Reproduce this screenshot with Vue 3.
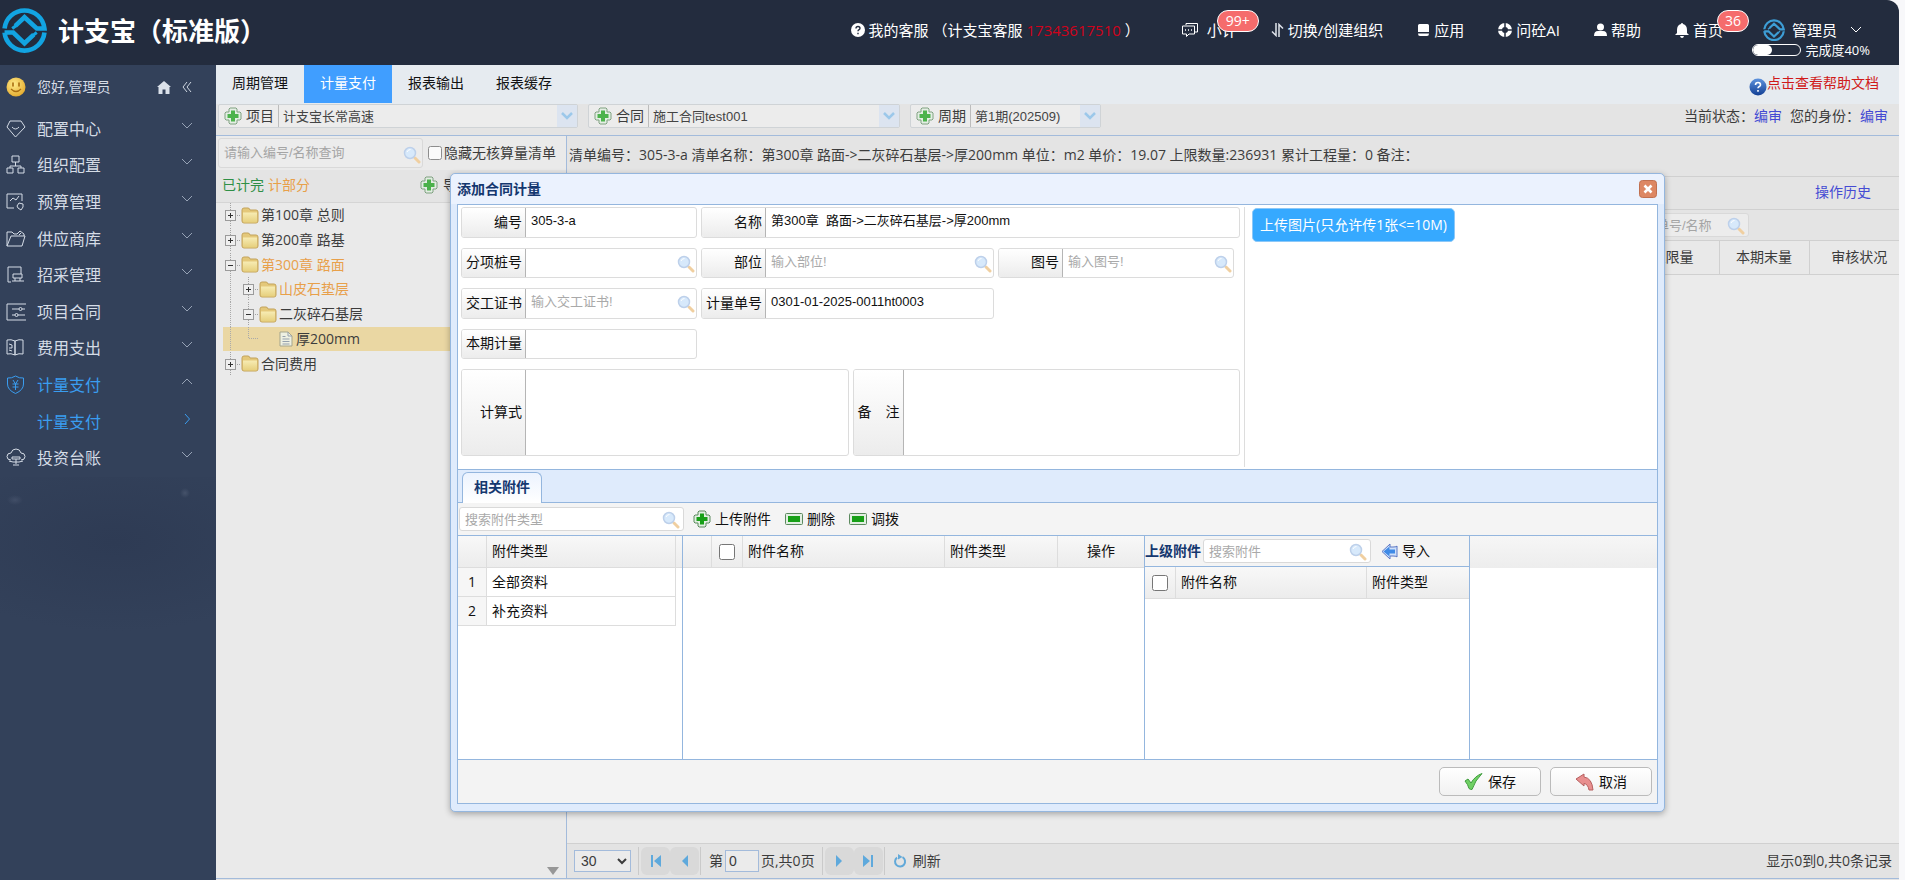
<script setup>
import { ref } from 'vue'

const menus = [
  { name: '配置中心', icon: 'gem' },
  { name: '组织配置', icon: 'org' },
  { name: '预算管理', icon: 'budget' },
  { name: '供应商库', icon: 'folder' },
  { name: '招采管理', icon: 'bid' },
  { name: '项目合同', icon: 'contract' },
  { name: '费用支出', icon: 'book' },
  { name: '计量支付', icon: 'shield', active: true, open: true },
  { name: '计量支付', child: true, active: true },
  { name: '投资台账', icon: 'cloud' }
]

const menuPaths = {
  gem: 'M4 2h11l4 6-9.500 10L1 8zM6 8q3.500 4 7 0',
  org: 'M6 1h7v6H6zM9.500 7v4M4 13v-2h11v2M1 13h6v5H1zM12 13h6v5h-6z',
  budget: 'M8 16H1V2h15v7M4 9l3-3 3 2 3-4M13 11l4 1v3l-2 3-3-2-1-2z',
  folder: 'M1 17V3h5l2 2h3l3-3 4 3v2M1 17L5 7h14l-3 10zM13 6l2-2',
  bid: 'M5 17H2V2h13v7M7 9h9v4H7zM6 16h12M9 13v3M14 13v3',
  contract: 'M20 2H1v16h19M6 7h7M16 7h3M6 13h3M12 13h7M13 7a1.500 1.500 0 1 0 3 0a1.500 1.500 0 1 0-3 0M9 13a1.500 1.500 0 1 0 3 0a1.500 1.500 0 1 0-3 0',
  book: 'M9 3Q5 1 1 2v14q4-1 8 1zM9 3q4-2 8-1v14q-4-1-8 1zM3 6l3 1v3H3M3 12l3 1',
  shield: 'M9.500 1q4 2.500 8 2v6q0 6-8 9.500q-8-3.500-8-9.500V3q4 .5 8-2M7 5l2.500 4L12 5M6.500 9h6M6.500 12h6M9.500 9v6',
  cloud: 'M5 12q-4 0-4-3.500Q1 5 5 5q1-4 5-4t5 4q4 0 4 3.500T15 12M6 9h8v2H6zM3 13l4 1h6l4-1M10 11v5M7 17h6'
}

const tabs = ['周期管理', '计量支付', '报表输出', '报表缓存']
const activeTab = ref('计量支付')

const tree = [
  { text: '第100章 总则', level: 0, open: false },
  { text: '第200章 路基', level: 0, open: false },
  { text: '第300章 路面', level: 0, open: true, partial: true },
  { text: '山皮石垫层', level: 1, open: false, partial: true },
  { text: '二灰碎石基层', level: 1, open: true },
  { text: '厚200mm', level: 2, leaf: true, selected: true },
  { text: '合同费用', level: 0, open: false }
]

const code = ref('305-3-a')
const itemName = ref('第300章  路面->二灰碎石基层->厚200mm')
const stake = ref('')
const part = ref('')
const drawing = ref('')
const certificate = ref('')
const orderNo = ref('0301-01-2025-0011ht0003')
const quantity = ref('')
const formula = ref('')
const remark = ref('')
</script>

<template>
  <div class="page">
    <svg class="defs" aria-hidden="true">
      <defs>
        <linearGradient id="g-folder" x1="0" y1="0" x2="0" y2="1">
          <stop offset="0" stop-color="#f7ecb4" /><stop offset="1" stop-color="#e6cf7c" />
        </linearGradient>
        <radialGradient id="g-smile" cx=".4" cy=".35" r=".7">
          <stop offset="0" stop-color="#ffeb8a" /><stop offset="1" stop-color="#e3a92c" />
        </radialGradient>
        <linearGradient id="g-help" x1="0" y1="0" x2="0" y2="1">
          <stop offset="0" stop-color="#5e93dd" /><stop offset="1" stop-color="#123f94" />
        </linearGradient>
      </defs>
      <symbol id="s-plus" viewBox="0 0 18 18">
        <path d="M6 1h6l1 1v3h3l1 1v6l-1 1h-3v3l-1 1H6l-1-1v-3H2l-1-1V6l1-1h3V2z" fill="#e2efe2" stroke="#5c8a5f" />
        <path d="M7 3.500h4V7h3.500v4H11v3.500H7V11H3.500V7H7z" fill="#17a017" />
      </symbol>
      <symbol id="s-minus" viewBox="0 0 18 12">
        <rect x=".5" y=".5" width="17" height="11" rx="1" fill="#e2efe2" stroke="#5c8a5f" />
        <rect x="3" y="3" width="12" height="6" fill="#17a017" />
      </symbol>
      <symbol id="s-search" viewBox="0 0 18 18">
        <path d="M12 12l4 4" stroke="#f0cfa0" stroke-width="3" stroke-linecap="round" />
        <circle cx="7" cy="7" r="5.500" fill="#d7e9fb" stroke="#bdd0ea" stroke-width="1.500" />
        <path d="M4 6q1-2.500 3.500-2.500" stroke="#fff" fill="none" />
      </symbol>
      <symbol id="s-logo" viewBox="0 0 44 44">
        <g fill="none" stroke="currentColor" stroke-width="4.500">
          <path d="M2.500 20.500A19.600 19.600 0 0 1 41.500 20.500H34L22 9.500L13 18" />
          <path d="M2.500 24.500A19.600 19.600 0 0 0 41.500 24.500M2.500 24.500H11L22 35L31 26.500" />
        </g>
        <path d="M10 20.500l4-3M34 24.500l-4 3" stroke="currentColor" stroke-width="3" />
      </symbol>
      <symbol id="s-folder" viewBox="0 0 18 17">
        <path d="M1 3q0-2 2-2h4q1.500 0 2 2h6q2 0 2 2v9q0 2-2 2H3q-2 0-2-2z" fill="#e4c87a" stroke="#c3a35a" />
        <path d="M2 5.500h14v8.500q0 1.500-1 1.500H3.500q-1.500 0-1.500-1.500z" fill="url(#g-folder)" />
      </symbol>
      <symbol id="s-doc" viewBox="0 0 14 16">
        <path d="M1 1h8l4 4v10H1z" fill="#eef0e2" stroke="#a5a58c" />
        <path d="M9 1v4h4M3.500 5.500h3M3.500 8h7M3.500 10.500h7M3.500 13h7" stroke="#96a1ad" fill="none" />
      </symbol>
    </svg>

    <header class="top">
      <svg class="brand-logo"><use href="#s-logo" /></svg>
      <h1>计支宝（标准版）</h1>
      <nav class="top-nav">
        <a href="#" class="nav-item service">
          <svg width="14" height="14" viewBox="0 0 14 14"><circle cx="7" cy="7" r="7" fill="#fff" /><path d="M5 5.500q0-2 2-2t2 1.800q0 1-1.200 1.600q-.8.400-.8 1.300M7 9.800v1.400" stroke="#232c3e" stroke-width="1.400" fill="none" /></svg>
          <span>我的客服</span>
          <span class="hotline">（计支宝客服 <b>17343617510</b> ）</span>
        </a>
        <a href="#" class="nav-item wide">
          <svg width="16" height="16" viewBox="0 0 16 16" fill="none" stroke="#fff"><path d="M4 3V1.500h11.500V10H13M.5 4h12v8H7l-2.500 2.500V12h-4z" /><path d="M3 8h1M6 8h1M9 8h1" stroke-width="1.500" /></svg>
          <span>小计</span><i class="badge badge-wide">99+</i>
        </a>
        <a href="#" class="nav-item">
          <svg width="13" height="14" viewBox="0 0 13 14" fill="none" stroke="#dfe3ea" stroke-width="1.500"><path d="M5 0v12.500L1 8.500M8 14V1.500l4 4" /></svg>
          <span>切换/创建组织</span>
        </a>
        <a href="#" class="nav-item">
          <svg width="13" height="14" viewBox="0 0 13 14"><path d="M2.500 1h8q1.500 0 1.500 1.500V9H1V2.500Q1 1 2.500 1zM1 10.500h11q0 2.500-2 2.500H3q-2 0-2-2.500z" fill="#fff" /></svg>
          <span>应用</span>
        </a>
        <a href="#" class="nav-item">
          <svg width="14" height="14" viewBox="0 0 14 14"><circle cx="7" cy="7" r="5" fill="none" stroke="#fff" stroke-width="4" /><path d="M7 0v4.500M7 9.500V14M0 7h4.500M9.500 7H14" stroke="#232c3e" stroke-width="1.500" /></svg>
          <span>问砼AI</span>
        </a>
        <a href="#" class="nav-item">
          <svg width="13" height="14" viewBox="0 0 13 14" fill="#fff"><circle cx="6.500" cy="4" r="3.500" /><path d="M0 13q0-5 4-5h5q4 0 4 5z" /></svg>
          <span>帮助</span>
        </a>
        <a href="#" class="nav-item">
          <svg width="14" height="15" viewBox="0 0 14 15" fill="#fff"><path d="M7 0q1 0 1 1q4 1 4 6v3l2 2H0l2-2V7q0-5 4-6q0-1 1-1zM5 13h4q-.5 2-2 2t-2-2z" /></svg>
          <span>首页</span><i class="badge">36</i>
        </a>
        <div class="user">
          <button class="user-btn">
            <svg width="22" height="22"><use href="#s-logo" /></svg>
            <span>管理员</span>
            <svg width="12" height="8" viewBox="0 0 12 8"><path d="M1 1l5 5 5-5" stroke="#fff" fill="none" /></svg>
          </button>
          <div class="progress"><span class="bar"><i></i></span>完成度40%</div>
        </div>
      </nav>
    </header>

    <div class="body">
      <aside class="side">
        <div class="hello">
          <svg width="20" height="20" viewBox="0 0 20 20"><circle cx="10" cy="10" r="9.500" fill="url(#g-smile)" /><path d="M7 6v3M13 6v3" stroke="#a86c10" stroke-width="1.600" stroke-linecap="round" /><path d="M5 12q5 5 10 0" stroke="#a86c10" fill="none" stroke-width="1.200" /></svg>
          <span>您好,管理员</span>
          <svg class="home" width="14" height="13" viewBox="0 0 14 13"><path d="M7 0l7 6h-1.500v7H8.500V8.500h-3V13h-4V6H0z" fill="#dbe1ea" /></svg>
          <svg width="10" height="12" viewBox="0 0 10 12"><path d="M5 1L1 6l4 5M9 1L5 6l4 5" stroke="#cfd7e2" fill="none" /></svg>
        </div>
        <nav class="menu">
          <a v-for="(m, i) in menus" :key="i" href="#" :class="{ on: m.active }">
            <svg v-if="m.icon" class="m-ico" viewBox="0 0 20 20"><path :d="menuPaths[m.icon]" /></svg>
            <span v-else class="m-ico"></span>
            <span>{{ m.name }}</span>
            <svg class="m-arr" :class="{ bright: m.child }" viewBox="0 0 12 12">
              <path v-if="m.child" d="M4 1l4.500 5L4 11" />
              <path v-else-if="m.open" d="M1 8l5-5 5 5" />
              <path v-else d="M1 3l5 5 5-5" />
            </svg>
          </a>
        </nav>
        <div class="side-rest"></div>
      </aside>

      <main class="main">
        <div class="tabs">
          <button v-for="t in tabs" :key="t" :class="{ on: t === activeTab }" @click="activeTab = t">{{ t }}</button>
          <a href="#" class="doc-link">
            <svg width="18" height="18" viewBox="0 0 18 18"><circle cx="9" cy="9" r="8.500" fill="url(#g-help)" /><path d="M6.500 7q0-2.500 2.500-2.500T11.500 7q0 1-1.500 1.700q-1 .5-1 1.600M9 12v1.700" stroke="#fff" stroke-width="1.600" fill="none" /></svg>
            <span>点击查看帮助文档</span>
          </a>
        </div>

        <div class="filters">
          <div class="combo combo-l">
            <label for="c1"><svg class="plus"><use href="#s-plus" /></svg>项目</label>
            <select id="c1"><option>计支宝长常高速</option></select>
            <svg class="c-arr" viewBox="0 0 20 22"><path d="M5 8l5 5 5-5" /></svg>
          </div>
          <div class="combo combo-m">
            <label for="c2"><svg class="plus"><use href="#s-plus" /></svg>合同</label>
            <select id="c2"><option>施工合同test001</option></select>
            <svg class="c-arr" viewBox="0 0 20 22"><path d="M5 8l5 5 5-5" /></svg>
          </div>
          <div class="combo combo-s">
            <label for="c3"><svg class="plus"><use href="#s-plus" /></svg>周期</label>
            <select id="c3"><option>第1期(202509)</option></select>
            <svg class="c-arr" viewBox="0 0 20 22"><path d="M5 8l5 5 5-5" /></svg>
          </div>
          <p class="status">当前状态：<a href="#">编审</a><span class="who">您的身份：</span><a href="#">编审</a></p>
        </div>

        <div class="work">
          <section class="left">
            <div class="left-search">
              <div class="sbox grow"><input aria-label="查询" placeholder="请输入编号/名称查询"><svg><use href="#s-search" /></svg></div>
              <label class="hide-chk"><input type="checkbox">隐藏无核算量清单</label>
            </div>
            <div class="left-bar">
              <span class="done">已计完</span><span class="partial">计部分</span>
              <button class="import"><svg class="plus"><use href="#s-plus" /></svg>导入</button>
            </div>
            <ul class="tree">
              <li v-for="n in tree" :key="n.text" :class="['lv' + n.level, { sel: n.selected, partial: n.partial }]">
                <span v-for="k in n.level" :key="k" class="guide" :class="{ blank: k === 2 }"></span>
                <button v-if="!n.leaf" class="exp" :aria-label="n.open ? '收起' : '展开'">
                  <svg width="18" height="24" viewBox="0 0 18 24">
                    <path d="M7.500 0v24M12 12.500h6" stroke="#a3a3a3" stroke-dasharray="1 1" />
                    <rect x="2.500" y="7.500" width="10" height="10" fill="#efefef" stroke="#9b9b9b" />
                    <path :d="n.open ? 'M5 12.500h5' : 'M5 12.500h5M7.500 10v5'" stroke="#333" />
                  </svg>
                </button>
                <svg v-if="n.leaf" class="doc"><use href="#s-doc" /></svg>
                <svg v-else class="folder"><use href="#s-folder" /></svg>
                <span class="t">{{ n.text }}</span>
              </li>
            </ul>
            <span class="down"></span>
          </section>

          <section class="right">
            <p class="info">清单编号：305-3-a 清单名称：第300章 路面-&gt;二灰碎石基层-&gt;厚200mm 单位：m2 单价：19.07 上限数量:236931 累计工程量：0 备注：</p>
            <div class="history"><a href="#">操作历史</a></div>
            <div class="r-search"><div class="sbox"><input aria-label="清单号/名称" placeholder="清单号/名称"><svg><use href="#s-search" /></svg></div></div>
            <table class="r-table">
              <thead><tr><th class="first">上限量</th><th>本期末量</th><th class="last">审核状况</th></tr></thead>
            </table>
            <div class="r-body"></div>
            <footer class="pager">
              <select aria-label="每页条数"><option>30</option></select>
              <i class="sep"></i>
              <button aria-label="首页"><svg viewBox="0 0 14 14"><path d="M2 1h2v12H2zM12 1v12L5 7z" /></svg></button>
              <button aria-label="上一页"><svg viewBox="0 0 14 14"><path d="M10 1v12L4 7z" /></svg></button>
              <i class="sep"></i>
              <label class="pg">第<input value="0">页,共0页</label>
              <i class="sep"></i>
              <button aria-label="下一页"><svg viewBox="0 0 14 14"><path d="M4 1v12l6-6z" /></svg></button>
              <button aria-label="末页"><svg viewBox="0 0 14 14"><path d="M10 1h2v12h-2zM2 1v12l7-6z" /></svg></button>
              <i class="sep"></i>
              <button class="refresh"><svg width="14" height="14" viewBox="0 0 14 14"><path d="M9.500 3.200A5 5 0 1 1 4 3.600" fill="none" stroke="#62a9d9" stroke-width="2" /><path d="M5 0v5.500L9.500 3z" fill="#62a9d9" /></svg>刷新</button>
              <span class="total">显示0到0,共0条记录</span>
            </footer>
          </section>
        </div>
      </main>
    </div>

    <section class="dialog" role="dialog" aria-labelledby="dlg-title">
      <div class="dlg-head">
        <h2 id="dlg-title">添加合同计量</h2>
        <button class="close" aria-label="关闭"><svg width="18" height="18" viewBox="0 0 18 18"><rect x=".5" y=".5" width="17" height="17" rx="3" fill="#dd8763" stroke="#c07050" /><path d="M5.500 5.500l7 7M12.500 5.500l-7 7" stroke="#fff" stroke-width="2.600" /></svg></button>
      </div>
      <div class="dlg-body">
        <div class="dlg-top">
          <form class="form" @submit.prevent>
            <div class="row">
              <div class="field f1"><label for="f-code">编号</label><input id="f-code" v-model="code"></div>
              <div class="field rest"><label for="f-name">名称</label><input id="f-name" v-model="itemName"></div>
            </div>
            <div class="row">
              <div class="field f1"><label for="f-stake">分项桩号</label><input id="f-stake" v-model="stake"><svg><use href="#s-search" /></svg></div>
              <div class="field f2"><label for="f-part">部位</label><input id="f-part" v-model="part" placeholder="输入部位!"><svg><use href="#s-search" /></svg></div>
              <div class="field f1"><label for="f-draw">图号</label><input id="f-draw" v-model="drawing" placeholder="输入图号!"><svg><use href="#s-search" /></svg></div>
            </div>
            <div class="row">
              <div class="field f1"><label for="f-cert">交工证书</label><input id="f-cert" v-model="certificate" placeholder="输入交工证书!"><svg><use href="#s-search" /></svg></div>
              <div class="field f2"><label for="f-order">计量单号</label><input id="f-order" v-model="orderNo"></div>
            </div>
            <div class="row">
              <div class="field f1"><label for="f-qty">本期计量</label><input id="f-qty" v-model="quantity"></div>
            </div>
            <div class="row">
              <div class="field rest"><label for="f-formula">计算式</label><textarea id="f-formula" v-model="formula"></textarea></div>
              <div class="field rest"><label for="f-remark" class="short"><span>备</span><span>注</span></label><textarea id="f-remark" v-model="remark"></textarea></div>
            </div>
          </form>
          <div class="upload-pane"><button class="upload">上传图片(只允许传1张&lt;=10M)</button></div>
        </div>

        <div class="strip"><button class="strip-tab">相关附件</button></div>
        <div class="att-bar">
          <div class="sbox att-search"><input aria-label="搜索附件类型" placeholder="搜索附件类型"><svg><use href="#s-search" /></svg></div>
          <button><svg class="plus"><use href="#s-plus" /></svg>上传附件</button>
          <button><svg class="minus"><use href="#s-minus" /></svg>删除</button>
          <button><svg class="minus"><use href="#s-minus" /></svg>调拨</button>
        </div>

        <div class="panes">
          <div class="pane p1">
            <table class="grid">
              <colgroup><col class="c28"><col><col class="c6"></colgroup>
              <thead><tr><th></th><th>附件类型</th><th></th></tr></thead>
              <tbody>
                <tr><td class="num">1</td><td>全部资料</td><td class="void"></td></tr>
                <tr><td class="num">2</td><td>补充资料</td><td class="void"></td></tr>
              </tbody>
            </table>
          </div>
          <div class="pane p2">
            <table class="grid">
              <colgroup><col class="c28"><col class="c31"><col><col class="c112"><col class="c86"></colgroup>
              <thead><tr><th></th><th class="chk"><input type="checkbox" aria-label="全选附件"></th><th>附件名称</th><th>附件类型</th><th class="mid">操作</th></tr></thead>
            </table>
          </div>
          <div class="pane p3">
            <div class="p3-bar">
              <strong>上级附件</strong>
              <div class="sbox p3-search"><input aria-label="搜索附件" placeholder="搜索附件"><svg><use href="#s-search" /></svg></div>
              <button><svg width="17" height="17" viewBox="0 0 17 17"><path d="M1 8.500L9 1v3h3q4 0 4-1v11q0-1-4-1H9v3z" fill="#cfe0fa" stroke="#5a76c4" /><path d="M2.500 8.500l6-5v3H14v4H8.500v3z" fill="#3f8ae6" /></svg>导入</button>
            </div>
            <table class="grid">
              <colgroup><col class="c31"><col><col class="c102"></colgroup>
              <thead><tr><th class="chk"><input type="checkbox" aria-label="全选上级附件"></th><th>附件名称</th><th>附件类型</th></tr></thead>
            </table>
          </div>
          <div class="pane p4"></div>
        </div>

        <div class="dlg-foot">
          <button class="btn"><svg width="19" height="17" viewBox="0 0 19 17"><path d="M1 8l3-2 3 4q4-7 11-9.500q-7 7-10 16q-2 0-3-1q-1-4-4-7.500z" fill="#6fd064" stroke="#3f9c3c" /></svg>保存</button>
          <button class="btn"><svg width="19" height="18" viewBox="0 0 19 18"><path d="M1 6l8-5v3q8 1 9 13h-4q-1-6-5-6.500V13z" fill="#e88f8f" stroke="#b65f5f" /></svg>取消</button>
        </div>
      </div>
    </section>
  </div>
</template>

<style>
body { margin: 0; background: #f8f8fa; }
</style>

<style scoped>
* { box-sizing: border-box; }
.page {
  position: relative;
  height: 100vh;
  padding-right: 6px;
  display: flex;
  flex-direction: column;
  overflow: hidden;
  font: 14px/20px "Open Sans", "Noto Sans CJK SC", sans-serif;
  color: #3c3c3c;
}
.defs { position: absolute; width: 0; height: 0; }
button { font: inherit; color: inherit; border: 0; background: none; padding: 0; display: inline-flex; align-items: center; }
a { text-decoration: none; color: inherit; }
svg { flex: none; display: block; }
p, h1, h2, ul { margin: 0; padding: 0; }
input, select, textarea { font: 13px/18px "Liberation Sans", "Noto Sans CJK SC", sans-serif; color: inherit; min-width: 0; }
input::placeholder { color: #a9a9a9; opacity: 1; }
.plus { width: 18px; height: 18px; }
.minus { width: 18px; height: 12px; }

.top { height: 65px; flex: none; display: flex; align-items: center; background: #232c3e; color: #fff; border-top-right-radius: 12px; padding: 0 29px 5px 2px; }
.brand-logo { width: 45px; height: 46px; color: #12a4e2; }
h1 { font: bold 26px/36px "Noto Sans CJK SC", sans-serif; margin-left: 11px; white-space: nowrap; }
.top-nav { flex: 1; display: flex; justify-content: flex-end; align-items: center; gap: 34px; font-size: 15px; white-space: nowrap; }
.nav-item { position: relative; display: flex; align-items: center; gap: 4px; }
.nav-item.wide { gap: 9px; }
.service { margin-right: 8px; }
.hotline b { font-weight: normal; color: #d0021b; }
.badge { position: absolute; left: 42px; top: -10px; min-width: 32px; height: 22px; padding: 0 6px; border: 1px solid #fff; border-radius: 11px; background: #f56c6c; font: 14px/20px "Open Sans", sans-serif; text-align: center; }
.badge-wide { left: 35px; min-width: 42px; }
.user { position: relative; width: 107px; margin-left: 6px; }
.user-btn { display: flex; gap: 7px; }
.user-btn svg:first-child { color: #3d9ed6; }
.user-btn svg:last-child { margin-left: 6px; }
.progress { position: absolute; right: 0; top: 22px; display: flex; align-items: center; gap: 4px; font-size: 13px; line-height: 18px; }
.bar { width: 49px; height: 12px; border: 1px solid #fff; border-radius: 6px; overflow: hidden; }
.bar i { display: block; width: 40%; height: 100%; border-radius: 6px; background: #fff; }

.body { flex: 1; min-height: 0; display: flex; }
.side { width: 216px; flex: none; background: #33415a; color: #d5dce6; display: flex; flex-direction: column; }
.hello { height: 46px; display: flex; align-items: center; padding: 0 24px 2px 6px; }
.hello span { margin-left: 11px; flex: 1; }
.hello .home { margin-right: 11px; }
.menu { height: 366px; display: grid; grid-template-rows: repeat(10, 1fr); font-size: 16px; }
.menu a { display: flex; align-items: center; padding: 0 23px 1px 6px; }
.menu .on { color: #3a9df0; }
.m-ico { width: 20px; height: 20px; margin-right: 11px; }
.m-ico path, .m-arr path { fill: none; stroke: currentColor; }
.m-arr { width: 12px; height: 12px; margin: 0 0 6px auto; color: #97a3b6; }
.m-arr.bright { color: #3a9df0; }
.side-rest { flex: 1; background: radial-gradient(circle at 185px 16px, #46536b, transparent 5px), radial-gradient(ellipse 8px 5px at 15px 23px, #414e67, transparent), radial-gradient(ellipse 190px 90px at 115px 65px, #2e3b54, transparent); }

.main { flex: 1; min-width: 0; display: flex; flex-direction: column; background: #e4e4e4; }
.tabs { height: 39px; flex: none; display: flex; background: #e6ebf0; color: #111; padding-right: 20px; }
.tabs button { width: 88px; height: 38px; justify-content: center; padding-bottom: 2px; }
.tabs .on { background: #409eff; color: #fff; }
.doc-link { margin-left: auto; display: flex; color: #d01a1a; align-items: center; }
.doc-link svg { margin-top: 4px; }
.doc-link span { margin-bottom: 3px; }
.filters { height: 32px; flex: none; display: flex; align-items: flex-start; border-bottom: 1px solid #a3bbdb; padding-left: 2px; }
.filters .plus, .left .plus { opacity: .75; }
.combo { position: relative; height: 24px; display: flex; border: 1px solid #cfd3d6; border-radius: 2px; background: #ececec; margin-right: 10px; }
.combo label { width: 60px; flex: none; display: flex; align-items: center; gap: 4px; padding-left: 5px; border-right: 1px solid #bcbcbc; }
.combo select { flex: 1; appearance: none; border: 0; background: none; padding: 2px 0 0 4px; outline: 0; color: #444; }
.c-arr { position: absolute; right: 0; top: 0; width: 20px; height: 22px; background: #dce4f0; pointer-events: none; }
.c-arr path { fill: none; stroke: #9cc8ea; stroke-width: 2.500; }
.combo-l { width: 360px; }
.combo-m { width: 312px; }
.combo-s { width: 191px; }
.status { margin: 2px 11px 0 auto; white-space: nowrap; }
.status a, .history a { color: #454bd3; }
.who { margin-left: 8px; }

.work { flex: 1; min-height: 0; display: flex; margin-bottom: 1px; border-bottom: 1px solid #a3bbdb; }
.left { position: relative; width: 350px; flex: none; background: #eaeaea; }
.left-search { height: 34px; display: flex; align-items: center; padding: 0 10px 0 2px; gap: 5px; }
.sbox { position: relative; display: flex; height: 24px; border: 1px solid #d9d9d9; border-radius: 3px; background: #fff; }
.sbox input { flex: 1; width: 100%; border: 0; outline: 0; background: none; padding: 2px 24px 0 5px; }
.sbox svg { position: absolute; right: 3px; top: 3px; width: 18px; height: 18px; }
.left-search .grow { flex: 1; height: 30px; background: #ececec; }
.grow input { padding-top: 0; }
.left-search .grow svg { top: 7px; right: 1px; }
.left input::placeholder, .right input::placeholder { color: #a5a5a5; }
.hide-chk { display: flex; align-items: center; gap: 2px; white-space: nowrap; }
.hide-chk input { width: 14px; height: 14px; margin: 0; opacity: .8; }
.left-bar { height: 33px; display: flex; align-items: center; gap: 4px; padding: 0 0 2px 6px; border-bottom: 1px solid #d5d5d5; background: #e4e4e4; }
.done { color: #2f8f46; }
.partial { color: #e8a04a; }
.left-bar .import { gap: 5px; margin-left: auto; padding-right: 95px; }
.tree { list-style: none; height: 173px; display: grid; grid-template-rows: repeat(7, 1fr); padding-left: 7px; }
.tree li { display: flex; align-items: center; overflow: hidden; }
.tree .sel { background: #ead7a3; }
.guide { width: 18px; height: 100%; background: repeating-linear-gradient(#aaa 0 1px, transparent 1px 2px) 7px 0 / 1px 100% no-repeat; }
.blank { background: repeating-linear-gradient(#aaa 0 1px, transparent 1px 2px) 7px 0 / 1px 50% no-repeat, repeating-linear-gradient(90deg, #aaa 0 1px, transparent 1px 2px) 8px 50% / 10px 1px no-repeat; }
.folder { width: 18px; height: 17px; }
.doc { width: 14px; height: 16px; margin: 0 1px 0 20px; }
.t { margin-left: 2px; }
.down { position: absolute; right: 7px; bottom: 3px; border: 6px solid transparent; border-top: 8px solid #979797; border-bottom: 0; }

.right { flex: 1; min-width: 0; border-left: 1px solid #a3bbdb; display: flex; flex-direction: column; }
.info { height: 41px; flex: none; padding: 9px 2px 0; border-bottom: 1px solid #d0d0d0; white-space: pre; }
.history { height: 33px; flex: none; display: flex; justify-content: flex-end; align-items: center; padding: 0 28px 2px 0; border-bottom: 1px solid #d0d0d0; }
.r-search { height: 31px; flex: none; display: flex; justify-content: flex-end; align-items: center; padding: 0 150px 1px 0; border-bottom: 1px solid #d0d0d0; }
.r-search .sbox { width: 112px; background: #ececec; }
.r-table { width: 100%; table-layout: fixed; border-collapse: collapse; background: #e9e9e9; }
.r-table th { width: 90px; height: 33px; padding: 0; font-weight: normal; text-align: center; border-bottom: 1px solid #d0d0d0; border-left: 1px solid #d0d0d0; }
.r-table .first { width: auto; border: 0; border-bottom: 1px solid #d0d0d0; text-align: right; padding-right: 25px; }
.r-table .last { padding-left: 10px; }
.r-body { flex: 1; background: #ebebeb; }
.pager { height: 35px; flex: none; display: flex; align-items: center; border-top: 1px solid #d0d0d0; padding: 0 7px 1px; background: #e3e3e3; }
.pager select { width: 57px; height: 22px; border: 1px solid #a3bbdb; background: #ebebeb; font-size: 14px; padding: 0 2px; }
.sep { width: 1px; height: 28px; background: #cacaca; margin: 0 2px 0 7px; }
.pager button { width: 29px; height: 28px; border-radius: 6px; background: #d9d9d9; justify-content: center; }
.pager button svg { width: 14px; height: 14px; fill: #5fa9dc; }
.pager button + .sep { margin: 0 8px 0 1px; }
.pg { display: flex; align-items: center; gap: 2px; white-space: nowrap; }
.pg input { width: 34px; height: 22px; border: 1px solid #a3bbdb; background: #ebebeb; padding: 0 3px; font-size: 14px; }
.pager .refresh { width: auto; background: none; gap: 6px; }
.total { margin-left: auto; }

.dialog { position: absolute; left: 450px; right: 240px; top: 173px; border: 1px solid #94b6de; border-radius: 5px; background: #dfebfc; padding: 0 6px 7px; box-shadow: 0 2px 6px rgba(0, 0, 0, .3); color: #111; }
.dlg-head { height: 30px; display: flex; align-items: center; justify-content: space-between; background: #ebf2fe; margin: 0 -6px; padding: 0 7px 1px 6px; border-radius: 5px 5px 0 0; }
h2 { font-size: 14px; line-height: 20px; color: #14376f; }
.dlg-body { border: 1px solid #94b6de; background: #fff; }
.dlg-top { display: flex; height: 264px; padding-top: 2px; }
.form { width: 787px; flex: none; display: grid; grid-template-rows: 31px 30px 31px 30px 87px; gap: 10px; padding: 0 4px 0 3px; border-right: 1px solid #ddd; margin-bottom: 2px; }
.row { display: flex; gap: 4px; }
.field { position: relative; display: flex; border: 1px solid #dcdcdc; border-radius: 3px; overflow: hidden; }
.f1 { width: 236px; }
.f2 { width: 293px; }
.rest { flex: 1; }
.field label { width: 64px; flex: none; display: flex; align-items: center; justify-content: flex-end; padding: 0 3px 2px 0; border-right: 1px solid #b5b5b5; background: linear-gradient(#fff, #ececec); white-space: nowrap; }
.field .short { width: 50px; justify-content: space-between; padding: 0 3px 2px 4px; }
.field input, .field textarea { flex: 1; border: 0; outline: 0; background: none; resize: none; padding: 0 5px 3px; }
.field svg { position: absolute; right: 1px; top: 6px; width: 18px; height: 18px; }
.upload-pane { padding: 1px 7px; }
.upload { height: 34px; padding: 0 7px; border: 1px solid #8cc8f8; border-radius: 5px; background: #36a9ff; color: #fff; white-space: nowrap; }

.strip { height: 34px; border: solid #94b6de; border-width: 1px 0; background: #dfebfc; padding: 2px 4px 0; }
.strip-tab { height: 31px; padding: 0 11px 2px; border: 1px solid #94b6de; border-bottom: 0; border-radius: 6px 6px 0 0; background: linear-gradient(#ecf3fe, #fff); color: #14376f; font-weight: bold; }
.att-bar { height: 32px; display: flex; align-items: center; background: #f4f4f4; padding: 0 0 1px 1px; }
.att-bar button { gap: 4px; margin-right: 14px; }
.att-search { width: 225px; margin-right: 9px; }
.panes { height: 225px; display: flex; border: solid #94b6de; border-width: 1px 0; }
.pane { border-right: 1px solid #94b6de; }
.p1 { width: 225px; }
.p2 { width: 462px; }
.p3 { width: 325px; }
.p4 { flex: 1; border: 0; background: linear-gradient(#f6f6f6, #ededed) 0 0 / 100% 32px no-repeat; }
.grid { width: 100%; table-layout: fixed; border-collapse: separate; border-spacing: 0; }
.c6 { width: 6px; }
.c28 { width: 29px; }
.c31 { width: 31px; }
.c86 { width: 86px; }
.c102 { width: 102px; }
.c112 { width: 113px; }
.grid th { height: 32px; padding: 0 5px 2px; text-align: left; font-weight: normal; background: linear-gradient(#f8f8f8, #ececec); border-right: 1px solid #ddd; border-bottom: 1px solid #ddd; }
.grid th:last-child { border-right: 0; }
.grid td { height: 29px; padding: 0 5px 1px; border: solid #ddd; border-width: 0 1px 1px 0; }
.grid .num { background: #f6f6f6; text-align: center; }
.grid .void { border: 0; padding: 0; }
.grid .chk { padding: 0 0 2px; text-align: center; }
.chk input { width: 16px; height: 16px; margin: 0; vertical-align: middle; }
.grid .mid { text-align: center; }
.p3-bar { height: 31px; display: flex; align-items: center; background: #f4f4f4; border-bottom: 1px solid #94b6de; }
.p3-bar strong { width: 58px; color: #14376f; white-space: nowrap; }
.p3-search { width: 168px; margin-right: 10px; }
.p3-bar button { gap: 4px; }
.dlg-foot { height: 43px; display: flex; justify-content: flex-end; align-items: center; gap: 9px; padding-right: 5px; background: #f3f3f3; }
.btn { width: 102px; height: 29px; justify-content: center; gap: 5px; border: 1px solid #bbb; border-radius: 5px; background: linear-gradient(#fff, #f1f1f1); }
</style>
